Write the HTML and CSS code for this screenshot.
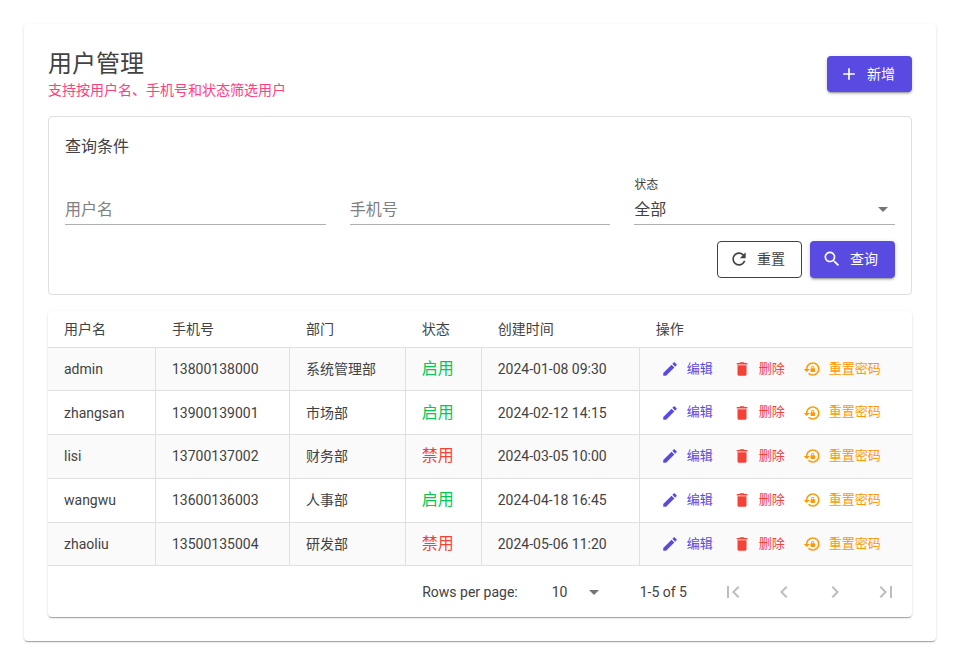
FILE: index.html
```
<!DOCTYPE html>
<html lang="zh-CN">
<head>
    <meta charset="UTF-8">
    <meta name="viewport" content="width=device-width, initial-scale=1.0">
    <title>用户管理</title>
    <link rel="stylesheet" href="styles.css">
</head>
<body>
    <!-- Icon shapes shared by the buttons -->
    <svg class="sprite" aria-hidden="true">
        <symbol id="icon-add" viewBox="0 0 24 24"><path d="M19 13h-6v6h-2v-6H5v-2h6V5h2v6h6v2z"/></symbol>
        <symbol id="icon-refresh" viewBox="0 0 24 24"><path d="M17.65 6.35C16.2 4.9 14.21 4 12 4c-4.42 0-7.99 3.58-7.99 8s3.57 8 7.99 8c3.73 0 6.84-2.55 7.73-6h-2.08c-.82 2.33-3.04 4-5.65 4-3.31 0-6-2.69-6-6s2.69-6 6-6c1.66 0 3.14.69 4.22 1.78L13 11h7V4l-2.35 2.35z"/></symbol>
        <symbol id="icon-search" viewBox="0 0 24 24"><path d="M15.5 14h-.79l-.28-.27C15.41 12.59 16 11.11 16 9.5 16 5.91 13.09 3 9.5 3S3 5.91 3 9.5 5.91 16 9.5 16c1.61 0 3.09-.59 4.23-1.57l.27.28v.79l5 4.99L20.49 19l-4.99-5zm-6 0C7.01 14 5 11.99 5 9.5S7.01 5 9.5 5 14 7.01 14 9.5 11.99 14 9.5 14z"/></symbol>
        <symbol id="icon-edit" viewBox="0 0 24 24"><path d="M3 17.25V21h3.75L17.81 9.94l-3.75-3.75L3 17.25zM20.71 7.04c.39-.39.39-1.02 0-1.41l-2.34-2.34c-.39-.39-1.02-.39-1.41 0l-1.83 1.83 3.75 3.75 1.83-1.83z"/></symbol>
        <symbol id="icon-delete" viewBox="0 0 24 24"><path d="M6 19c0 1.1.9 2 2 2h8c1.1 0 2-.9 2-2V7H6v12zM19 4h-3.5l-1-1h-5l-1 1H5v2h14V4z"/></symbol>
        <symbol id="icon-lock-reset" viewBox="0 0 24 24"><path d="M13 3c-4.97 0-9 4.03-9 9H1l4 3.99L9 12H6c0-3.86 3.14-7 7-7s7 3.14 7 7-3.14 7-7 7c-1.9 0-3.62-.76-4.88-1.99L6.7 18.42C8.32 20.01 10.55 21 13 21c4.97 0 9-4.03 9-9s-4.03-9-9-9zm2 8v-1c0-1.1-.9-2-2-2s-2 .9-2 2v1c-.55 0-1 .45-1 1v3c0 .55.45 1 1 1h4c.55 0 1-.45 1-1v-3c0-.55-.45-1-1-1zm-1 0h-2v-1c0-.55.45-1 1-1s1 .45 1 1v1z"/></symbol>
        <symbol id="icon-caret" viewBox="0 0 24 24"><path d="M7 10l5 5 5-5z"/></symbol>
        <symbol id="icon-first" viewBox="0 0 24 24"><path d="M18.41 16.59L13.82 12l4.59-4.59L17 6l-6 6 6 6zM6 6h2v12H6z"/></symbol>
        <symbol id="icon-prev" viewBox="0 0 24 24"><path d="M15.41 7.41L14 6l-6 6 6 6 1.41-1.41L10.83 12z"/></symbol>
        <symbol id="icon-next" viewBox="0 0 24 24"><path d="M10 6L8.59 7.41 13.17 12l-4.58 4.59L10 18l6-6z"/></symbol>
        <symbol id="icon-last" viewBox="0 0 24 24"><path d="M5.59 7.41L10.18 12l-4.59 4.59L7 18l6-6-6-6zM16 6h2v12h-2z"/></symbol>
    </svg>

    <main class="paper page">
        <header class="page-header">
            <div>
                <h1>用户管理</h1>
                <p class="subtitle">支持按用户名、手机号和状态筛选用户</p>
            </div>
            <button type="button" class="btn btn-filled"><svg class="icon"><use href="#icon-add"/></svg>新增</button>
        </header>

        <form class="filter" onsubmit="return false">
            <h2>查询条件</h2>
            <div class="filter-fields">
                <div class="field">
                    <input type="text" id="userName" aria-label="用户名" placeholder="用户名">
                </div>
                <div class="field">
                    <input type="text" id="phone" aria-label="手机号" placeholder="手机号">
                </div>
                <div class="field">
                    <label for="status">状态</label>
                    <div class="select">
                        <select id="status">
                            <option>全部</option>
                            <option>启用</option>
                            <option>禁用</option>
                        </select>
                        <svg class="caret"><use href="#icon-caret"/></svg>
                    </div>
                </div>
            </div>
            <div class="filter-actions">
                <button type="reset" class="btn btn-outlined"><svg class="icon"><use href="#icon-refresh"/></svg>重置</button>
                <button type="submit" class="btn btn-filled"><svg class="icon"><use href="#icon-search"/></svg>查询</button>
            </div>
        </form>

        <section class="paper">
            <table>
                <thead>
                    <tr>
                        <th class="col-name">用户名</th>
                        <th class="col-phone">手机号</th>
                        <th class="col-dept">部门</th>
                        <th class="col-status">状态</th>
                        <th class="col-created">创建时间</th>
                        <th>操作</th>
                    </tr>
                </thead>
                <tbody id="userRows"></tbody>
            </table>

            <div class="pager">
                <label for="pageSize">Rows per page:</label>
                <div class="select page-size">
                    <select id="pageSize">
                        <option>10</option>
                        <option>25</option>
                        <option>50</option>
                    </select>
                    <svg class="caret"><use href="#icon-caret"/></svg>
                </div>
                <span class="page-info">1-5 of 5</span>
                <div class="page-buttons">
                    <button type="button" disabled aria-label="First page"><svg><use href="#icon-first"/></svg></button>
                    <button type="button" disabled aria-label="Previous page"><svg><use href="#icon-prev"/></svg></button>
                    <button type="button" disabled aria-label="Next page"><svg><use href="#icon-next"/></svg></button>
                    <button type="button" disabled aria-label="Last page"><svg><use href="#icon-last"/></svg></button>
                </div>
            </div>
        </section>
    </main>

    <script>
        const users = [
            { name: 'admin', phone: '13800138000', dept: '系统管理部', enabled: true, created: '2024-01-08 09:30' },
            { name: 'zhangsan', phone: '13900139001', dept: '市场部', enabled: true, created: '2024-02-12 14:15' },
            { name: 'lisi', phone: '13700137002', dept: '财务部', enabled: false, created: '2024-03-05 10:00' },
            { name: 'wangwu', phone: '13600136003', dept: '人事部', enabled: true, created: '2024-04-18 16:45' },
            { name: 'zhaoliu', phone: '13500135004', dept: '研发部', enabled: false, created: '2024-05-06 11:20' }
        ];

        document.getElementById('userRows').innerHTML = users.map(user => `
            <tr>
                <td>${user.name}</td>
                <td>${user.phone}</td>
                <td>${user.dept}</td>
                <td><span class="status ${user.enabled ? 'enabled' : 'disabled'}">${user.enabled ? '启用' : '禁用'}</span></td>
                <td>${user.created}</td>
                <td>
                    <div class="row-actions">
                        <button type="button" class="btn-text edit"><svg class="icon"><use href="#icon-edit"/></svg>编辑</button>
                        <button type="button" class="btn-text delete"><svg class="icon"><use href="#icon-delete"/></svg>删除</button>
                        <button type="button" class="btn-text reset"><svg class="icon"><use href="#icon-lock-reset"/></svg>重置密码</button>
                    </div>
                </td>
            </tr>`).join('');
    </script>
</body>
</html>
```
FILE: styles.css
```
* {
    box-sizing: border-box;
}

body {
    margin: 0;
    padding: 24px;
    background-color: #fff;
    color: #424242;
    font-family: Roboto, "Noto Sans CJK SC", sans-serif;
    font-size: 14px;
    line-height: 20px;
}

h1, h2, p {
    margin: 0;
    font-weight: 400;
}

button, input, select {
    font-family: inherit;
    color: inherit;
}

button {
    cursor: pointer;
}

svg {
    fill: currentColor;
    flex-shrink: 0;
}

.sprite {
    display: none;
}

.paper {
    background-color: #fff;
    border-radius: 4px;
    box-shadow: 0 2px 1px -1px rgba(0, 0, 0, 0.2), 0 1px 1px 0 rgba(0, 0, 0, 0.14), 0 1px 3px 0 rgba(0, 0, 0, 0.12);
}

.page {
    display: flex;
    flex-direction: column;
    gap: 16px;
    padding: 24px;
}

.page-header {
    display: flex;
    align-items: center;
    justify-content: space-between;
}

h1 {
    font-size: 24px;
    line-height: 32px;
}

.subtitle {
    color: #ff4081;
}

/* Buttons */
.btn {
    display: inline-flex;
    align-items: center;
    min-width: 85px;
    padding: 6px 16px;
    border: 0;
    border-radius: 4px;
    font-size: 14px;
    line-height: 1.75;
}

.btn .icon {
    width: 20px;
    height: 20px;
    margin: 0 8px 0 -4px;
}

.btn-filled {
    background-color: #594ae2;
    color: #fff;
    box-shadow: 0 3px 1px -2px rgba(0, 0, 0, 0.2), 0 2px 2px 0 rgba(0, 0, 0, 0.14), 0 1px 5px 0 rgba(0, 0, 0, 0.12);
}

.btn-outlined {
    padding: 5px 15px;
    border: 1px solid #424242;
    background-color: transparent;
}

.btn-text {
    display: inline-flex;
    align-items: center;
    justify-content: center;
    min-width: 64px;
    padding: 4px 5px;
    border: 0;
    border-radius: 4px;
    background-color: transparent;
    font-size: 13px;
    line-height: 1.75;
}

.btn-text .icon {
    width: 18px;
    height: 18px;
    margin: 0 8px 0 -2px;
}

.edit {
    color: #594ae2;
}

.delete {
    color: #f44336;
}

.reset {
    color: #ff9800;
}

/* Filter panel */
.filter {
    padding: 16px;
    border: 1px solid #e0e0e0;
    border-radius: 4px;
}

h2 {
    font-size: 16px;
    line-height: 28px;
}

.filter-fields {
    display: grid;
    grid-template-columns: repeat(3, 1fr);
    gap: 24px;
    margin: 16px 0;
}

.field {
    display: flex;
    flex-direction: column;
    justify-content: flex-end;
}

.field label {
    font-size: 12px;
    line-height: 16px;
}

.field input,
.field select {
    width: 100%;
    height: 32px;
    padding: 2px 0 0;
    border: 0;
    border-bottom: 1px solid #b0b0b0;
    border-radius: 0;
    background-color: transparent;
    font-size: 16px;
    outline: none;
}

.field input::placeholder {
    color: #808080;
    opacity: 1;
}

.select {
    display: grid;
    align-items: center;
}

.select > * {
    grid-area: 1 / 1;
}

.select select {
    appearance: none;
}

.caret {
    width: 24px;
    height: 24px;
    justify-self: end;
    color: #757575;
    pointer-events: none;
}

.filter-actions {
    display: flex;
    justify-content: flex-end;
    gap: 8px;
}

/* User table */
table {
    width: 100%;
    border-collapse: separate;
    border-spacing: 0;
}

th, td {
    padding: 6px 16px;
    border-bottom: 1px solid #e0e0e0;
    text-align: left;
    font-weight: 400;
    white-space: nowrap;
}

th {
    line-height: 24px;
}

.col-name {
    width: 12.5%;
}

.col-phone {
    width: 15.5%;
}

.col-dept {
    width: 13.4%;
}

.col-status {
    width: 8.8%;
}

.col-created {
    width: 18.3%;
}

td:not(:last-child) {
    border-right: 1px solid #e0e0e0;
}

tbody tr:nth-child(odd) {
    background-color: #fafafa;
}

.status {
    font-size: 16px;
}

.enabled {
    color: #00c853;
}

.disabled {
    color: #f44336;
}

.row-actions {
    display: flex;
    gap: 8px;
}

/* Pagination */
.pager {
    display: flex;
    align-items: center;
    justify-content: flex-end;
    min-height: 51px;
    padding-right: 2px;
}

.page-size {
    width: 54px;
    margin: 0 34px;
}

.page-size select {
    padding: 0;
    border: 0;
    background-color: transparent;
    font-size: 14px;
    outline: none;
}

.page-buttons {
    display: flex;
    gap: 3px;
    margin-left: 22px;
}

.page-buttons button {
    display: flex;
    padding: 12px;
    border: 0;
    background-color: transparent;
    color: #bdbdbd;
}

.page-buttons svg {
    width: 24px;
    height: 24px;
}
```
